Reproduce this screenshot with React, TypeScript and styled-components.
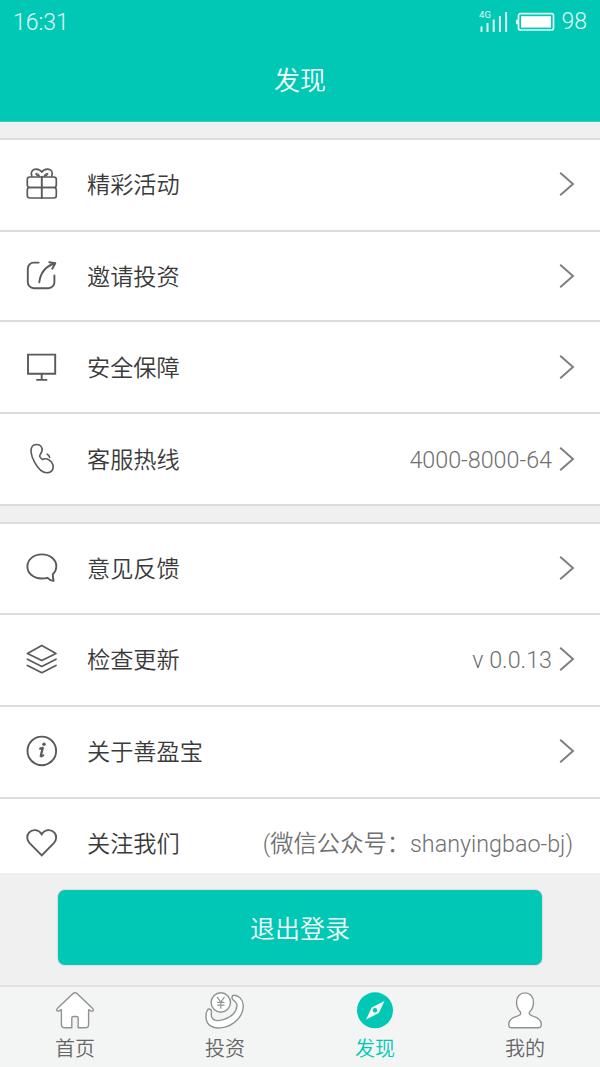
import React from "react";
import styled, { createGlobalStyle } from "styled-components";

const TEAL = "#00c8b4";

const GlobalStyle = createGlobalStyle`
  * { box-sizing: border-box; }
  body {
    margin: 0;
    background: #f0f0f0;
    font-family: Roboto, "Noto Sans CJK SC", sans-serif;
    font-weight: 350;
  }
  svg { display: block; flex: none; }
`;

const Screen = styled.div`
  width: 600px;
  height: 1067px;
  display: flex;
  flex-direction: column;
  overflow: hidden;
  background: #f0f0f0;
`;

const Header = styled.header`
  height: 122px;
  flex: none;
  background: ${TEAL};
  color: #f4fdfc;
  border-bottom: 1px solid #35cfc0;
`;

const StatusBar = styled.div`
  height: 43px;
  display: flex;
  align-items: center;
  padding: 1px 13px 0 13px;
  font-size: 23px;
  line-height: 28px;
  font-weight: 300;
  color: #e2f9f6;
`;

const Clock = styled.span`
  padding-top: 2px;
`;

const StatusIcons = styled.div`
  margin-left: auto;
  display: flex;
  align-items: center;
`;

const Percent = styled.span`
  margin-left: 6px;
`;

const Title = styled.h1`
  margin: 0;
  height: 76px;
  line-height: 76px;
  text-align: center;
  font-size: 26px;
  font-weight: 350;
`;

const Group = styled.section<{ $gap: number }>`
  flex: none;
  margin-top: ${(p) => p.$gap}px;
  border-top: 2px solid #dcdcdc;
  background: #fff;
`;

const Row = styled.div<{ $h: number; $raised?: boolean; $last?: boolean }>`
  height: ${(p) => p.$h}px;
  display: flex;
  align-items: center;
  padding: 0 25px ${(p) => (p.$raised ? 2 : 0)}px 24px;
  border-bottom: ${(p) => (p.$last ? 0 : 2)}px solid #dcdcdc;
`;

const Label = styled.span`
  margin-left: 27px;
  font-size: 23.2px;
  line-height: 34px;
  color: #3a3a3a;
  padding-top: 2px;
`;

const Value = styled.span<{ $flush?: boolean }>`
  margin-left: auto;
  margin-right: ${(p) => (p.$flush ? 2 : 7)}px;
  padding-top: 2px;
  font-size: 23.3px;
  line-height: 34px;
  color: #707070;
  white-space: nowrap;
`;

const Action = styled.div`
  flex: 1;
  padding: 17px 58px 0;
`;

const LogoutButton = styled.button`
  display: block;
  width: 484px;
  height: 75px;
  padding: 0 0 2px;
  border: 0;
  border-radius: 7px;
  background: ${TEAL};
  box-shadow: 0 0 2px rgba(0, 0, 0, 0.25);
  color: #f4fdfc;
  font: inherit;
  font-size: 25px;
`;

const TabBar = styled.nav`
  height: 82px;
  flex: none;
  display: grid;
  grid-template-columns: repeat(4, 1fr);
  border-top: 2px solid #dfe1e1;
  background: #f3f5f5;
`;

const Tab = styled.div<{ $active?: boolean }>`
  display: flex;
  flex-direction: column;
  align-items: center;
  padding-top: 5px;
  font-size: 20px;
  line-height: 28px;
  color: ${(p) => (p.$active ? TEAL : "#666")};
`;

const TabLabel = styled.span`
  margin-top: 5px;
`;

const Glyph = ({ children }: { children: React.ReactNode }) => (
  <svg
    width="36"
    height="36"
    viewBox="0 0 36 36"
    fill="none"
    stroke="#5a5a5a"
    strokeWidth="1.9"
    strokeLinecap="round"
    strokeLinejoin="round"
  >
    {children}
  </svg>
);

const Gift = () => (
  <Glyph>
    <rect x="3.300" y="11" width="29" height="10.500" rx="2.400" strokeWidth="1.700" />
    <rect x="3.300" y="21.500" width="29" height="10.500" rx="2.400" strokeWidth="1.700" />
    <path d="M17.800 10.700V32" />
    <path d="M8 10.400C6.300 6.800 8 3.300 11.700 3.100c2.800-.1 5 1.200 6.100 3.100 1.100-1.900 3.300-3.200 6.100-3.100 3.700.2 5.400 3.700 3.700 7.300" strokeWidth="1.600" />
    <path d="M15.500 10.400c-.5-1.700-1.700-2.900-3.700-2.900 0 1.300 1.500 2.300 3.700 2.900ZM20.100 10.400c.5-1.700 1.700-2.900 3.700-2.900 0 1.300-1.500 2.300-3.700 2.900Z" strokeWidth="1.200" />
  </Glyph>
);

const Share = () => (
  <Glyph>
    <path d="M14.700 4.600H9.800a6 6 0 0 0-6 6v13.600a6 6 0 0 0 6 6h14.600a6 6 0 0 0 6-6v-6.800" />
    <path d="M15.300 24.200c1-8.700 5.200-15.300 15-18.700M25.300 4.200l6 1-3 5.500" />
  </Glyph>
);

const Monitor = () => (
  <Glyph>
    <path d="M4 5.600h27.200v19.200H4zM17.700 24.800v6M13 30.900h9.500" strokeLinejoin="miter" />
  </Glyph>
);

const Phone = () => (
  <Glyph>
    <path d="M9.500 4.200C13 2.600 17 3.700 18 7.200c.8 2.900-.8 4.900-2 6.600-1 1.600.7 3.600 2.700 4.700 2.600-1.700 6.400-.4 8.700 2.500 2.800 3.500 2.300 8.700-1.700 10.200-5.700 2-11.300-2.700-15.300-10.300-3.500-6.400-5-13.700-.9-16.700Z" strokeWidth="1.600" />
    <path d="M23.200 13.200q2 1 2.400 3.200" strokeWidth="1.600" />
  </Glyph>
);

const Chat = () => (
  <Glyph>
    <path d="M28.800 24.200c2.200-2.100 3.500-4.900 3.500-8C32.300 9.400 26 4.400 17.800 4.400S3.400 9.600 3.400 16.500s6.100 12 14.200 12c2 0 4-.2 6-.7 1.500 1.700 3.500 2.800 6 3.100-.5-2.200-.8-4.300-.8-6.700Z" />
  </Glyph>
);

const Layers = () => (
  <Glyph>
    <path d="m17.800 4.500 14.200 8-14.200 6.900-14.400-6.900ZM3.400 18.200l14.400 7.200L32 18.200M3.400 24.500l14.400 7.200L32 24.500" strokeWidth="1.700" />
  </Glyph>
);

const Info = () => (
  <Glyph>
    <circle cx="17.800" cy="17.900" r="14.300" />
    <path d="M16.200 15.600l2.600-.7-2.100 8.100q.8.800 2.500-.7" strokeWidth="2.200" />
    <circle cx="20" cy="11.300" r="1.700" fill="#5a5a5a" stroke="none" />
  </Glyph>
);

const Heart = () => (
  <Glyph>
    <path d="M17.700 30.400 5.600 18.200C2.600 15 2.500 10.500 5 7.700c3.500-3.900 9.800-3.400 12.700 1.600 2.900-5 9.200-5.500 12.700-1.600 2.500 2.800 2.400 7.300-.6 10.500Z" strokeLinejoin="miter" />
  </Glyph>
);

const ChevronIcon = styled.svg<{ $push?: boolean }>`
  margin-left: ${(p) => (p.$push ? "auto" : "0")};
`;

const Chevron = ({ push }: { push?: boolean }) => (
  <ChevronIcon $push={push} width="16" height="26" viewBox="0 0 16 26">
    <path d="M1.200 1.700 14 13 1.200 24.300" fill="none" stroke="#7c7c7c" strokeWidth="1.900" />
  </ChevronIcon>
);

const Signal = () => (
  <svg width="30" height="24" viewBox="0 0 30 24">
    <text x="0" y="8" fontFamily="Roboto, sans-serif" fontSize="9.500" fontWeight="400" fill="#e2f9f6" textLength="12">4G</text>
    <path d="M2.500 16.500V22M8.500 13v9M14.700 9.500V22M20.900 6v16M27.100 2v20" stroke="#e2f9f6" strokeWidth="2" />
  </svg>
);

const BatteryIcon = styled.svg`
  margin-left: 7px;
  margin-top: -1px;
`;

const Battery = () => (
  <BatteryIcon width="39" height="20" viewBox="0 0 39 20">
    <rect x="2.500" y="1.700" width="35" height="16.300" rx="2" fill="none" stroke="#e2f9f6" strokeWidth="1.700" />
    <rect x="5" y="4.200" width="30" height="11.400" fill="#fff" />
    <path d="M1 7.700v4.500" stroke="#e2f9f6" strokeWidth="2" />
  </BatteryIcon>
);

const TabGlyph = ({ children }: { children: React.ReactNode }) => (
  <svg width="40" height="38" viewBox="0 0 40 38" fill="#fff" stroke="#8f9193" strokeWidth="1.400" strokeLinejoin="round" strokeLinecap="round">
    {children}
  </svg>
);

const Home = () => (
  <TabGlyph>
    <path d="M18 1.500q2-1.400 4 0L37.700 16.600c1.500 1.700-.1 3.200-2 2.200l-2.100-1.100v14.700q0 3.300-3.300 3.300H23.200v-9.500q0-1.700-1.700-1.700h-3q-1.700 0-1.700 1.700v9.500H9.700q-3.300 0-3.300-3.300V17.700l-2.100 1.100c-1.900 1-3.500-.5-2-2.200Z" />
  </TabGlyph>
);

const Invest = () => (
  <TabGlyph>
    <path d="M29 3.300c4.800 0 9 4.200 9.200 10C38.700 24 29 33.700 17.500 35.600 7.300 37.400 1.300 32.500 1 25.400c-.1-2.400.4-5.600 1.500-7.400 1.200-1.800 4-.7 4 1.200 0 1.500-.7 3.500.1 5.500 1.500 3.900 6 4.500 10.900 3.200C26.400 25.500 33 18.900 31.700 12.200c-.5-2.700-3-3.400-4-4.700-1.200-1.700-.8-4.200 1.300-4.200Z" />
    <circle cx="15.800" cy="10.500" r="9.700" />
    <path d="m12.400 5.300 3.400 4.700 3.400-4.700M15.800 10v6.200M12.600 10.400h6.400M12.600 13.200h6.400" fill="none" strokeWidth="1.200" />
  </TabGlyph>
);

const Compass = () => (
  <TabGlyph>
    <circle cx="20" cy="18.300" r="18" fill={TEAL} stroke="none" />
    <path d="m29.500 9-5.700 12.100L11 27.600 16.700 15.400Z" fill="#f3f5f5" stroke="none" />
    <circle cx="20" cy="18.300" r="2.200" fill={TEAL} stroke="none" />
  </TabGlyph>
);

const Person = () => (
  <TabGlyph>
    <path d="M20 .9c-5 0-8.500 3.800-8.500 9.300 0 4.300 1.400 7.300 4 9.900.7 2.500-.8 3.200-4 4.300-4.700 1.500-7.800 3.400-7.800 8q0 3.300 3.300 3.300h26q3.300 0 3.300-3.300c0-4.600-3.100-6.500-7.800-8-3.200-1.100-4.700-1.800-4-4.300 2.600-2.600 4-5.600 4-9.900C28.500 4.700 25 .9 20 .9Z" />
  </TabGlyph>
);

interface Item {
  label: string;
  icon: React.ReactNode;
  h: number;
  value?: string;
  raised?: boolean;
  last?: boolean;
}

const service: Item[] = [
  { label: "精彩活动", icon: <Gift />, h: 92, raised: true },
  { label: "邀请投资", icon: <Share />, h: 90 },
  { label: "安全保障", icon: <Monitor />, h: 92 },
  { label: "客服热线", icon: <Phone />, h: 92, value: "4000-8000-64" },
];

const about: Item[] = [
  { label: "意见反馈", icon: <Chat />, h: 91, raised: true },
  { label: "检查更新", icon: <Layers />, h: 92, value: "v 0.0.13", raised: true },
  { label: "关于善盈宝", icon: <Info />, h: 92, raised: true },
  { label: "关注我们", icon: <Heart />, h: 90, value: "(微信公众号：shanyingbao-bj)", raised: true, last: true },
];

const Rows = ({ items }: { items: Item[] }) => (
  <>
    {items.map((it) => (
      <Row key={it.label} $h={it.h} $raised={it.raised} $last={it.last}>
        {it.icon}
        <Label>{it.label}</Label>
        {it.value && <Value $flush={it.last}>{it.value}</Value>}
        {!it.last && <Chevron push={!it.value} />}
      </Row>
    ))}
  </>
);

const List = styled.main`
  height: 751px;
  flex: none;
  overflow: hidden;
`;

export default function App() {
  return (
    <Screen>
      <GlobalStyle />
      <Header>
        <StatusBar>
          <Clock>16:31</Clock>
          <StatusIcons>
            <Signal />
            <Battery />
            <Percent>98</Percent>
          </StatusIcons>
        </StatusBar>
        <Title>发现</Title>
      </Header>
      <List>
        <Group $gap={16}>
          <Rows items={service} />
        </Group>
        <Group $gap={16}>
          <Rows items={about} />
        </Group>
      </List>
      <Action>
        <LogoutButton>退出登录</LogoutButton>
      </Action>
      <TabBar>
        <Tab><Home /><TabLabel>首页</TabLabel></Tab>
        <Tab><Invest /><TabLabel>投资</TabLabel></Tab>
        <Tab $active><Compass /><TabLabel>发现</TabLabel></Tab>
        <Tab><Person /><TabLabel>我的</TabLabel></Tab>
      </TabBar>
    </Screen>
  );
}
